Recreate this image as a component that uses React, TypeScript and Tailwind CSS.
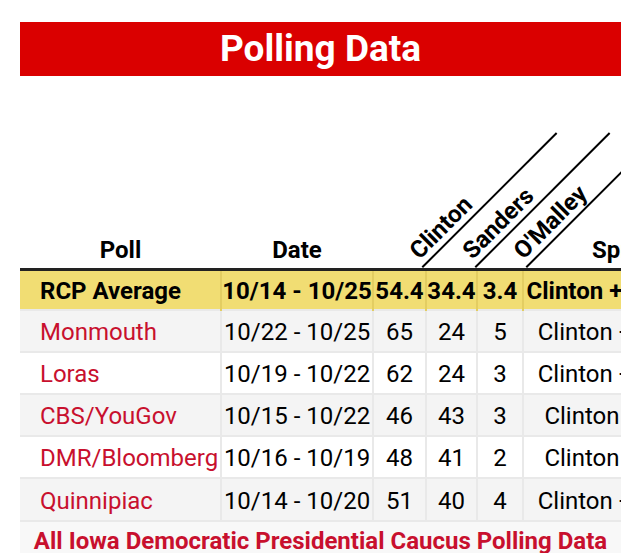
const rows = [
  { poll: 'Monmouth', date: '10/22 - 10/25', c: '65', s: '24', o: '5', spread: 'Clinton +41' },
  { poll: 'Loras', date: '10/19 - 10/22', c: '62', s: '24', o: '3', spread: 'Clinton +38' },
  { poll: 'CBS/YouGov', date: '10/15 - 10/22', c: '46', s: '43', o: '3', spread: 'Clinton +3' },
  { poll: 'DMR/Bloomberg', date: '10/16 - 10/19', c: '48', s: '41', o: '2', spread: 'Clinton +7' },
  { poll: 'Quinnipiac', date: '10/14 - 10/20', c: '51', s: '40', o: '4', spread: 'Clinton +11' },
];

function Rotated({ label }: { label: string }) {
  return (
    <div className="w-[190px] origin-bottom-left -rotate-45 translate-x-[50px] border-b-2 border-black pl-[3px] pb-0 text-left text-[24px] leading-[27px] font-bold whitespace-nowrap">
      {label}
    </div>
  );
}

export default function App() {
  return (
    <div className="min-h-[553px] bg-white pt-[22px] text-black font-['Roboto','Liberation_Sans',sans-serif]">
      <div className="ml-[20px] w-[601px] overflow-hidden">
        <h2 className="h-[54px] bg-[#da0000] text-center text-[37px] font-bold leading-[54px] text-white">
          Polling Data
        </h2>

        <table className="w-[653px] table-fixed border-collapse text-[24px] leading-[28px]">
          <colgroup>
            <col className="w-[201px]" />
            <col className="w-[152px]" />
            <col className="w-[53px]" />
            <col className="w-[51px]" />
            <col className="w-[46px]" />
            <col className="w-[150px]" />
          </colgroup>
          <thead>
            <tr className="h-[193px] border-b-[3px] border-[#222]">
              <th className="align-bottom pb-[4px] text-center text-[24px] font-bold">Poll</th>
              <th className="align-bottom pb-[4px] text-center text-[24px] font-bold">Date</th>
              <th className="align-bottom p-0">
                <Rotated label="Clinton" />
              </th>
              <th className="align-bottom p-0">
                <Rotated label="Sanders" />
              </th>
              <th className="align-bottom p-0">
                <Rotated label="O'Malley" />
              </th>
              <th className="align-bottom pb-[4px] pl-[69px] text-left text-[24px] font-bold whitespace-nowrap">
                Spread
              </th>
            </tr>
          </thead>
          <tbody>
            <tr className="h-[41px] bg-[#f1dd73] font-bold">
              <td className="border-r-2 border-[#e3cd62] pt-[3px] pl-[20px] whitespace-nowrap">RCP Average</td>
              <td className="border-r-2 border-[#e3cd62] pt-[3px] text-center whitespace-nowrap">10/14 - 10/25</td>
              <td className="border-r-2 border-[#e3cd62] pt-[3px] text-center">54.4</td>
              <td className="border-r-2 border-[#e3cd62] pt-[3px] text-center">34.4</td>
              <td className="border-r-2 border-[#e3cd62] pt-[3px] text-center">3.4</td>
              <td className="pt-[3px] text-center whitespace-nowrap">Clinton +20.0</td>
            </tr>
            {rows.map((r, i) => (
              <tr
                key={r.poll}
                className={`h-[42px] border-t-2 border-[#e9e9e9] ${i % 2 === 0 ? 'bg-[#f4f4f4]' : 'bg-white'}`}
              >
                <td className="border-r-2 border-[#e9e9e9] pt-[2px] pl-[20px] text-[#c8102e] whitespace-nowrap">{r.poll}</td>
                <td className="border-r-2 border-[#e9e9e9] pt-[2px] text-center whitespace-nowrap">{r.date}</td>
                <td className="border-r-2 border-[#e9e9e9] pt-[2px] text-center">{r.c}</td>
                <td className="border-r-2 border-[#e9e9e9] pt-[2px] text-center">{r.s}</td>
                <td className="border-r-2 border-[#e9e9e9] pt-[2px] text-center">{r.o}</td>
                <td className="pt-[2px] text-center whitespace-nowrap">{r.spread}</td>
              </tr>
            ))}
          </tbody>
        </table>

        <div className="h-[40px] border-t-2 border-[#e9e9e9] bg-[#f8f8f8] pt-[2px] text-center text-[24px] font-bold leading-[34px] whitespace-nowrap text-[#c8102e]">
          All Iowa Democratic Presidential Caucus Polling Data
        </div>
      </div>
    </div>
  );
}
